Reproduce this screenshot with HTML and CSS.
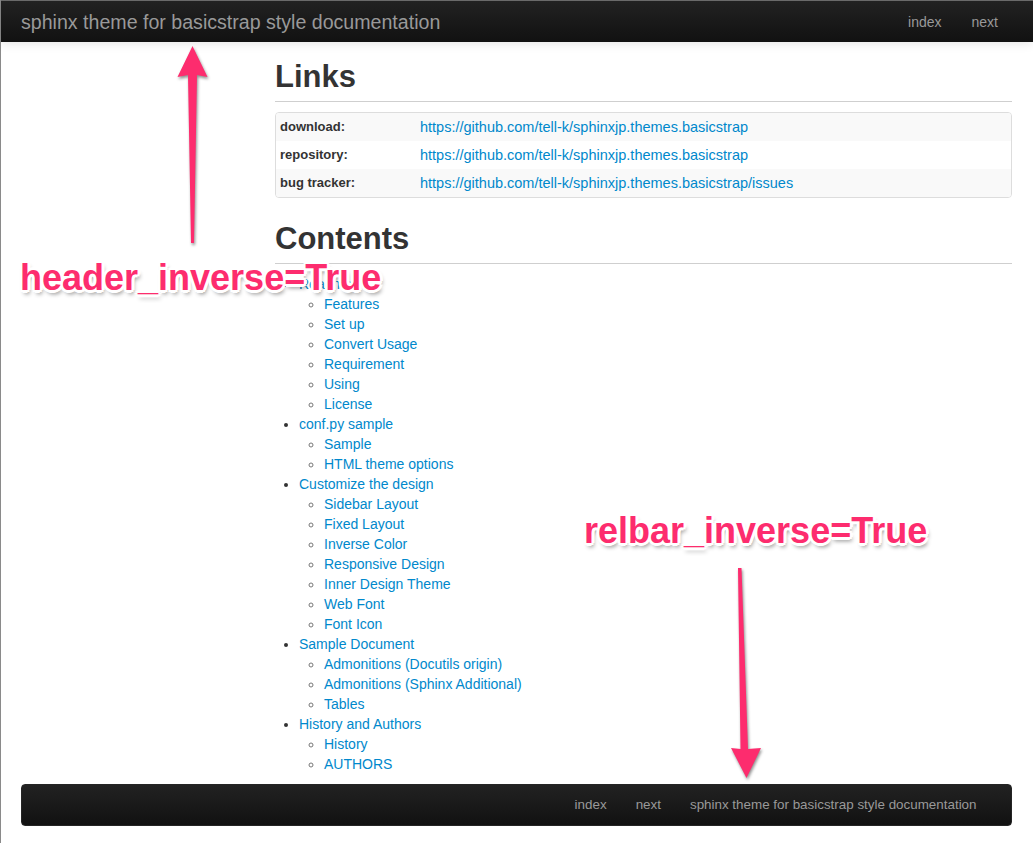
FILE: index.html
```html
<!DOCTYPE html>
<html lang="en">
<head>
<meta charset="utf-8">
<title>sphinx theme for basicstrap style documentation</title>
<link rel="stylesheet" href="styles.css">
</head>
<body>
<div class="page">
  <header class="navbar">
    <a class="brand" href="#">sphinx theme for basicstrap style documentation</a>
    <nav class="nav">
      <a href="#">index</a>
      <a href="#">next</a>
    </nav>
  </header>

  <div class="layout">
    <aside class="sidebar"></aside>
    <main class="content">
      <h1 class="section-title">Links</h1>
      <div class="field-box">
        <table class="field-list">
          <tbody>
            <tr class="odd"><th>download:</th><td><a href="#">https://github.com/tell-k/sphinxjp.themes.basicstrap</a></td></tr>
            <tr><th>repository:</th><td><a href="#">https://github.com/tell-k/sphinxjp.themes.basicstrap</a></td></tr>
            <tr class="odd"><th>bug tracker:</th><td><a href="#">https://github.com/tell-k/sphinxjp.themes.basicstrap/issues</a></td></tr>
          </tbody>
        </table>
      </div>

      <h1 class="section-title section-title--contents">Contents</h1>
      <ul class="toc">
        <li><a href="#">Readme</a>
          <ul>
            <li><a href="#">Features</a></li>
            <li><a href="#">Set up</a></li>
            <li><a href="#">Convert Usage</a></li>
            <li><a href="#">Requirement</a></li>
            <li><a href="#">Using</a></li>
            <li><a href="#">License</a></li>
          </ul>
        </li>
        <li><a href="#">conf.py sample</a>
          <ul>
            <li><a href="#">Sample</a></li>
            <li><a href="#">HTML theme options</a></li>
          </ul>
        </li>
        <li><a href="#">Customize the design</a>
          <ul>
            <li><a href="#">Sidebar Layout</a></li>
            <li><a href="#">Fixed Layout</a></li>
            <li><a href="#">Inverse Color</a></li>
            <li><a href="#">Responsive Design</a></li>
            <li><a href="#">Inner Design Theme</a></li>
            <li><a href="#">Web Font</a></li>
            <li><a href="#">Font Icon</a></li>
          </ul>
        </li>
        <li><a href="#">Sample Document</a>
          <ul>
            <li><a href="#">Admonitions (Docutils origin)</a></li>
            <li><a href="#">Admonitions (Sphinx Additional)</a></li>
            <li><a href="#">Tables</a></li>
          </ul>
        </li>
        <li><a href="#">History and Authors</a>
          <ul>
            <li><a href="#">History</a></li>
            <li><a href="#">AUTHORS</a></li>
          </ul>
        </li>
      </ul>
    </main>
  </div>

  <footer class="relbar">
    <nav class="nav nav--small">
      <a href="#">index</a>
      <a href="#">next</a>
      <a href="#">sphinx theme for basicstrap style documentation</a>
    </nav>
  </footer>

  <svg class="arrows" width="1033" height="843" viewBox="0 0 1033 843" aria-hidden="true">
    <polygon class="arrow" points="192.5,46 207.5,77 197,75 194,243 191,243 188,75 177.5,77"/>
    <polygon class="arrow" points="738,568 741.5,568 748,749 761,748 746.5,778 731,748 740.5,749"/>
  </svg>
  <div class="callout callout--header">header_inverse=True</div>
  <div class="callout callout--relbar">relbar_inverse=True</div>
</div>
</body>
</html>
```
FILE: styles.css
```css
* { box-sizing: border-box; }

html, body {
  margin: 0;
  background: #fff;
}

body {
  font-family: "Liberation Sans", Arial, sans-serif;
  font-size: 14px;
  line-height: 20px;
  color: #333;
}

a {
  color: #0088cc;
  text-decoration: none;
}

.page {
  position: relative;
  min-height: 843px;
  border-left: 1px solid #8a8a8a;
}

/* top navbar */
.navbar {
  height: 42px;
  display: flex;
  align-items: center;
  justify-content: space-between;
  padding: 0 20px;
  background: linear-gradient(#222222, #111111);
  border-top: 1px solid #6a6a6a;
  box-shadow: 0 1px 10px rgba(0, 0, 0, 0.12);
}

.brand {
  color: #999;
  font-size: 19.6px;
  line-height: 20px;
}

.nav {
  display: flex;
  align-items: center;
}

.nav a {
  color: #999;
  font-size: 14px;
  line-height: 20px;
  padding: 0 15px;
}

/* layout */
.layout {
  display: grid;
  grid-template-columns: 254px 1fr;
  padding: 0 21px 0 20px;
}

.section-title {
  margin: 15px 0 0;
  font-size: 31px;
  line-height: 40px;
  font-weight: bold;
  color: #333;
  padding-bottom: 4px;
  border-bottom: 1px solid #cfcfcf;
}

.section-title--contents {
  margin-top: 21px;
}

.field-box {
  margin-top: 10px;
  border: 1px solid #dddddd;
  border-radius: 4px;
  overflow: hidden;
}

.field-list {
  width: 100%;
  border-collapse: collapse;
}

.field-list th,
.field-list td {
  padding: 4px 5px 4px 4px;
  line-height: 20px;
  text-align: left;
  vertical-align: middle;
}

.field-list th {
  width: 140px;
  font-size: 13px;
  font-weight: bold;
  color: #333;
}

.field-list td {
  font-size: 14.5px;
}

.field-list tr.odd {
  background: #f9f9f9;
}

.toc {
  margin: 10px 0 0;
  padding-left: 24px;
  list-style: disc;
}

.toc ul {
  margin: 0;
  padding-left: 25px;
  list-style: circle;
}

.toc ul li::marker {
  color: #777;
}

/* bottom relbar */
.relbar {
  margin: 10px 21px 0 20px;
  height: 42px;
  display: flex;
  align-items: center;
  justify-content: flex-end;
  padding-right: 20px;
  background: linear-gradient(#222222, #111111);
  border: 1px solid #252525;
  border-radius: 4px;
}

.nav--small a {
  font-size: 13.4px;
  padding: 0 14.5px;
}

/* annotations drawn over the screenshot */
.arrows {
  position: absolute;
  left: -1px;
  top: 0;
  pointer-events: none;
  overflow: visible;
}

.arrow {
  fill: #fd2c6e;
  filter: drop-shadow(1px 2px 1.5px rgba(0, 0, 0, 0.45));
}

.callout {
  position: absolute;
  font-family: "Liberation Sans", Arial, sans-serif;
  font-size: 36px;
  line-height: 1;
  font-weight: bold;
  color: #fd2c6e;
  white-space: nowrap;
  text-shadow:
    3px 0 #fff, -3px 0 #fff, 0 3px #fff, 0 -3px #fff,
    2px 2px #fff, -2px -2px #fff, 2px -2px #fff, -2px 2px #fff,
    2px 4px 4px rgba(0, 0, 0, 0.45);
}

.callout--header {
  left: 19px;
  top: 260px;
}

.callout--relbar {
  left: 583px;
  top: 513px;
}
```
